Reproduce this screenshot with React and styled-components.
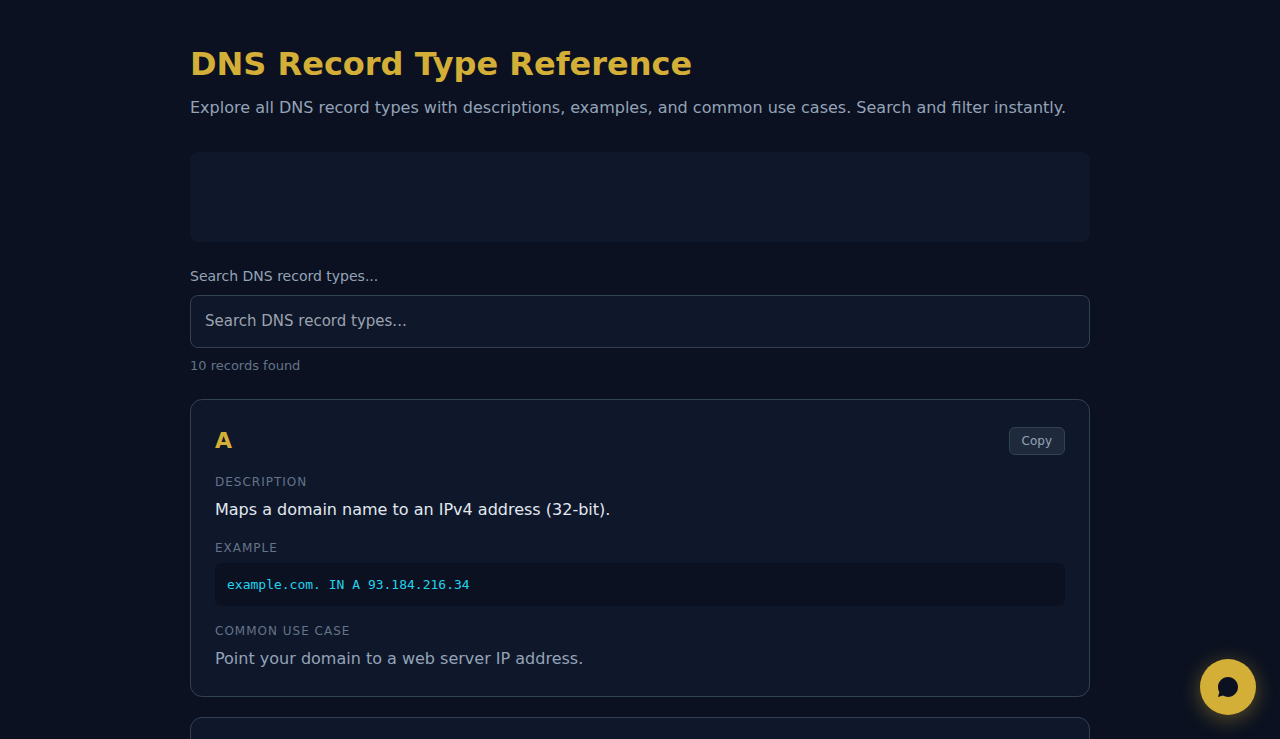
import React, { useState } from "react";
import styled, { createGlobalStyle } from "styled-components";

const GlobalStyle = createGlobalStyle`
  *, *::before, *::after { box-sizing: border-box; }
  html, body { margin: 0; padding: 0; }
  html { scrollbar-width: none; }
  body {
    background: #0b1120;
    color: #e2e8f0;
    font-family: "DejaVu Sans", sans-serif;
    font-size: 16px;
    line-height: 1.5;
  }
`;

const Page = styled.main`
  width: 900px;
  margin: 0 auto;
  padding: 40px 0;
`;

const Title = styled.h1`
  margin: 0 0 8px;
  font-size: 32px;
  font-weight: 700;
  color: #d4af37;
`;

const Subtitle = styled.p`
  margin: 0 0 32px;
  color: #94a3b8;
`;

const Banner = styled.div`
  height: 90px;
  margin-bottom: 24px;
  border-radius: 8px;
  background: #0f172a;
`;

const SearchLabel = styled.label`
  display: block;
  margin-bottom: 8px;
  font-size: 14px;
  color: #94a3b8;
`;

const SearchInput = styled.input`
  display: block;
  width: 100%;
  height: 52.5px;
  padding: 14px;
  border: 1px solid #334155;
  border-radius: 8px;
  outline: none;
  background: #0f172a;
  color: #e2e8f0;
  font-family: inherit;
  font-size: 15px;
  line-height: 1.5;

  &::placeholder {
    color: #9ca3af;
    opacity: 1;
  }
`;

const Count = styled.p`
  margin: 8px 0 24px;
  font-size: 13px;
  color: #64748b;
`;

const RecordList = styled.div`
  display: flex;
  flex-direction: column;
  gap: 20px;
`;

const Card = styled.article`
  padding: 24px;
  border: 1px solid #334155;
  border-radius: 12px;
  background: #0f172a;
`;

const CardHeader = styled.header`
  display: flex;
  align-items: center;
  justify-content: space-between;
  margin-bottom: 16px;
`;

const RecordType = styled.h2`
  margin: 0;
  font-size: 22px;
  font-weight: 700;
  color: #d4af37;
`;

const CopyButton = styled.button`
  padding: 6px 12px;
  border: 1px solid #334155;
  border-radius: 6px;
  background: #1e293b;
  color: #94a3b8;
  font-family: inherit;
  font-size: 12px;
  line-height: normal;
  cursor: pointer;
`;

const Field = styled.section`
  & + & { margin-top: 16px; }
`;

const FieldLabel = styled.div`
  margin-bottom: 6px;
  font-size: 12px;
  letter-spacing: 1px;
  text-transform: uppercase;
  color: #64748b;
`;

const FieldText = styled.p`
  margin: 0;
  line-height: 1.6;
  color: ${(p) => (p.$muted ? "#94a3b8" : "#e2e8f0")};
`;

const Example = styled.div`
  padding: 12px;
  border-radius: 6px;
  background: #0b1120;
  color: #22d3ee;
  font-family: "DejaVu Sans Mono", monospace;
  font-size: 13px;
`;

const ChatButton = styled.button`
  position: fixed;
  right: 24px;
  bottom: 24px;
  display: flex;
  align-items: center;
  justify-content: center;
  width: 56px;
  height: 56px;
  padding: 0;
  border: 0;
  border-radius: 50%;
  background: #d4af37;
  color: #0b1120;
  box-shadow: 0 4px 20px rgba(212, 175, 55, 0.4);
  cursor: pointer;
`;

const records = [
  ["A", "Maps a domain name to an IPv4 address (32-bit).", "example.com. IN A 93.184.216.34", "Point your domain to a web server IP address."],
  ["AAAA", "Maps a domain name to an IPv6 address (128-bit).", "example.com. IN AAAA 2606:2800:220:1:248:1893:25c8:1946", "Enable IPv6 connectivity for your domain."],
  ["CNAME", "Creates an alias from one domain name to another.", "www.example.com. IN CNAME example.com.", "Point subdomains to another domain name."],
  ["MX", "Specifies the mail servers for a domain.", "example.com. IN MX 10 mail.example.com.", "Route email to your mail provider."],
  ["TXT", "Stores arbitrary text data for a domain.", 'example.com. IN TXT "v=spf1 -all"', "SPF, DKIM, and domain verification."],
  ["NS", "Delegates a zone to an authoritative name server.", "example.com. IN NS ns1.example.com.", "Set the name servers of your domain."],
  ["SOA", "Holds administrative information about a zone.", "example.com. IN SOA ns1.example.com. admin.example.com. 1 7200 3600 1209600 3600", "Control zone transfers and caching."],
  ["SRV", "Specifies the host and port of a service.", "_sip._tcp.example.com. IN SRV 10 5 5060 sip.example.com.", "Service discovery for SIP and XMPP."],
  ["PTR", "Maps an IP address back to a domain name.", "34.216.184.93.in-addr.arpa. IN PTR example.com.", "Reverse DNS lookups for mail servers."],
  ["CAA", "Restricts which authorities may issue certificates.", 'example.com. IN CAA 0 issue "letsencrypt.org"', "Prevent unauthorized certificate issuance."],
].map(([type, description, example, useCase]) => ({ type, description, example, useCase }));

function RecordCard({ record }) {
  return (
    <Card>
      <CardHeader>
        <RecordType>{record.type}</RecordType>
        <CopyButton type="button" onClick={() => navigator.clipboard?.writeText(record.example)}>
          Copy
        </CopyButton>
      </CardHeader>
      <Field>
        <FieldLabel>Description</FieldLabel>
        <FieldText>{record.description}</FieldText>
      </Field>
      <Field>
        <FieldLabel>Example</FieldLabel>
        <Example>{record.example}</Example>
      </Field>
      <Field>
        <FieldLabel>Common Use Case</FieldLabel>
        <FieldText $muted>{record.useCase}</FieldText>
      </Field>
    </Card>
  );
}

export default function App() {
  const [query, setQuery] = useState("");
  const needle = query.trim().toLowerCase();
  const found = records.filter((r) => Object.values(r).join(" ").toLowerCase().includes(needle));

  return (
    <>
      <GlobalStyle />
      <Page>
        <Title>DNS Record Type Reference</Title>
        <Subtitle>
          Explore all DNS record types with descriptions, examples, and common use cases. Search and filter instantly.
        </Subtitle>
        <Banner />
        <SearchLabel htmlFor="search">Search DNS record types...</SearchLabel>
        <SearchInput
          id="search"
          placeholder="Search DNS record types..."
          value={query}
          onChange={(e) => setQuery(e.target.value)}
        />
        <Count>{`${found.length} records found`}</Count>
        <RecordList>
          {found.map((r) => (
            <RecordCard key={r.type} record={r} />
          ))}
        </RecordList>
      </Page>
      <ChatButton type="button" aria-label="Open chat">
        <svg width="24" height="24" viewBox="0 0 24 24" fill="currentColor" aria-hidden="true">
          <path d="M12 2C6.48 2 2 6.48 2 12c0 1.85.5 3.58 1.38 5.07L2 22l4.93-1.38A9.96 9.96 0 0 0 12 22c5.52 0 10-4.48 10-10S17.52 2 12 2z" />
        </svg>
      </ChatButton>
    </>
  );
}
